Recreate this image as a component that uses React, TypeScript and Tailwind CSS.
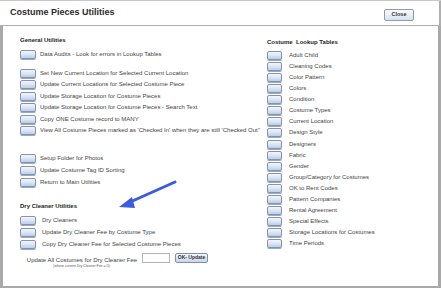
const generalTop = [
  'Set New Current Location for Selected Current Location',
  'Update Current Locations for Selected Costume Piece',
  'Update Storage Location for Costume Pieces',
  'Update Storage Location for Costume Pieces - Search Text',
  'Copy ONE Costume record to MANY',
  "View All Costume Pieces marked as 'Checked In' when they are still 'Checked Out''",
];

const generalBottom = ['Setup Folder for Photos', 'Update Costume Tag ID Sorting', 'Return to Main Utilities'];

const dryCleaner = [
  'Dry Cleaners',
  'Update Dry Cleaner Fee by Costume Type',
  'Copy Dry Cleaner Fee for Selected Costume Pieces',
];

const lookups = [
  'Adult Child',
  'Cleaning Codes',
  'Color Pattern',
  'Colors',
  'Condition',
  'Costume Types',
  'Current Location',
  'Design Style',
  'Designers',
  'Fabric',
  'Gender',
  'Group/Category for Costumes',
  'OK to Rent Codes',
  'Pattern Companies',
  'Rental Agreement',
  'Special Effects',
  'Storage Locations for Costumes',
  'Time Periods',
];

function BlueButton({ w = 'w-[16px]' }: { w?: string }) {
  return (
    <div
      className={`${w} h-[9px] shrink-0 rounded-[2px] border border-[#8394b3] bg-linear-to-b from-[#f3f6fb] via-[#dce6f4] to-[#bccde6] shadow-[0_1px_0_#9aa8c0]`}
    />
  );
}

function Row({ label, h, gap = 'gap-[4px]', w }: { label: string; h: string; gap?: string; w?: string }) {
  return (
    <div className={`flex items-center ${gap} ${h}`}>
      <BlueButton w={w} />
      <span className="whitespace-nowrap text-[6px] text-[#444]">{label}</span>
    </div>
  );
}

export default function App() {
  return (
    <div className="relative flex h-[288px] w-[441px] flex-col overflow-hidden border-t border-[#c9c9c9] bg-white font-['Liberation_Sans',Arial,sans-serif]">
      <div className="flex h-[25px] shrink-0 items-center justify-between border-b border-r-2 border-[#b0b0b0] pl-[10px] pr-[25px]">
        <h1 className="text-[9px] font-bold text-[#2b2b2b]">Costume Pieces Utilities</h1>
        <button className="mt-[3px] h-[12px] w-[30px] rounded-[2px] border border-[#8e9bb0] bg-linear-to-b from-[#fbfcfe] to-[#d9e1ee] text-[5.5px] font-bold text-[#333]">
          Close
        </button>
      </div>

      <div className="relative flex flex-1 border-x-[3px] border-b-[2px] border-[#a9a9a9]">
        <div className="w-[244px] shrink-0 pl-[17px] pt-[9px]">
          <h2 className="h-[10px] text-[6px] font-bold leading-[10px] text-[#1e1e1e]">General Utilities</h2>
          <div className="mt-[3.5px]">
            <Row label="Data Audits - Look for errors in Lookup Tables" h="h-[11.5px]" />
          </div>
          <div className="mt-[7.25px]">
            {generalTop.map((t) => (
              <Row key={t} label={t} h="h-[11.5px]" />
            ))}
          </div>
          <div className="mt-[16px]">
            {generalBottom.map((t) => (
              <Row key={t} label={t} h="h-[12.2px]" />
            ))}
          </div>
          <h2 className="mt-[12.2px] h-[10px] text-[6px] font-bold leading-[10px] text-[#1e1e1e]">Dry Cleaner Utilities</h2>
          <div className="mt-[2.9px]">
            {dryCleaner.map((t) => (
              <Row key={t} label={t} h="h-[12.3px]" gap="gap-[6px]" />
            ))}
          </div>
          <div className="mt-[2px] flex items-start">
            <div className="flex w-[121px] flex-col items-center pl-[3px] pt-[3px]">
              <span className="whitespace-nowrap text-[6px] leading-[8px] text-[#444]">
                Update All Costumes for Dry Cleaner Fee
              </span>
              <span className="whitespace-nowrap text-[3.5px] leading-[5px] text-[#555]">
                (where current Dry Cleaner Fee = 0):
              </span>
            </div>
            <div className="ml-[1px] h-[10px] w-[28px] border border-[#b5b5b5] bg-white" />
            <button className="ml-[5px] h-[10px] w-[33px] rounded-[2px] border border-[#7f8fae] bg-linear-to-b from-[#f5f8fc] to-[#c9d6ea] text-[5px] font-bold leading-none text-[#333]">
              OK- Update
            </button>
          </div>
        </div>

        <div className="flex-1 pl-[20px] pt-[11px]">
          <h2 className="h-[10px] whitespace-pre text-[6px] font-bold leading-[10px] text-[#1e1e1e]">
            {'Costume  Lookup Tables'}
          </h2>
          <div className="mt-[2.75px]">
            {lookups.map((t) => (
              <Row key={t} label={t} h="h-[11.1px]" gap="gap-[7px]" w="w-[15px]" />
            ))}
          </div>
        </div>

        <svg className="pointer-events-none absolute left-[110px] top-[150px]" width="70" height="40" viewBox="0 0 70 40">
          <line x1="62" y1="6" x2="15" y2="27" stroke="#3d5be0" strokeWidth="3" strokeLinecap="round" />
          <polygon points="6,31 19,21 22,32" fill="#3d5be0" />
        </svg>
      </div>
    </div>
  );
}
